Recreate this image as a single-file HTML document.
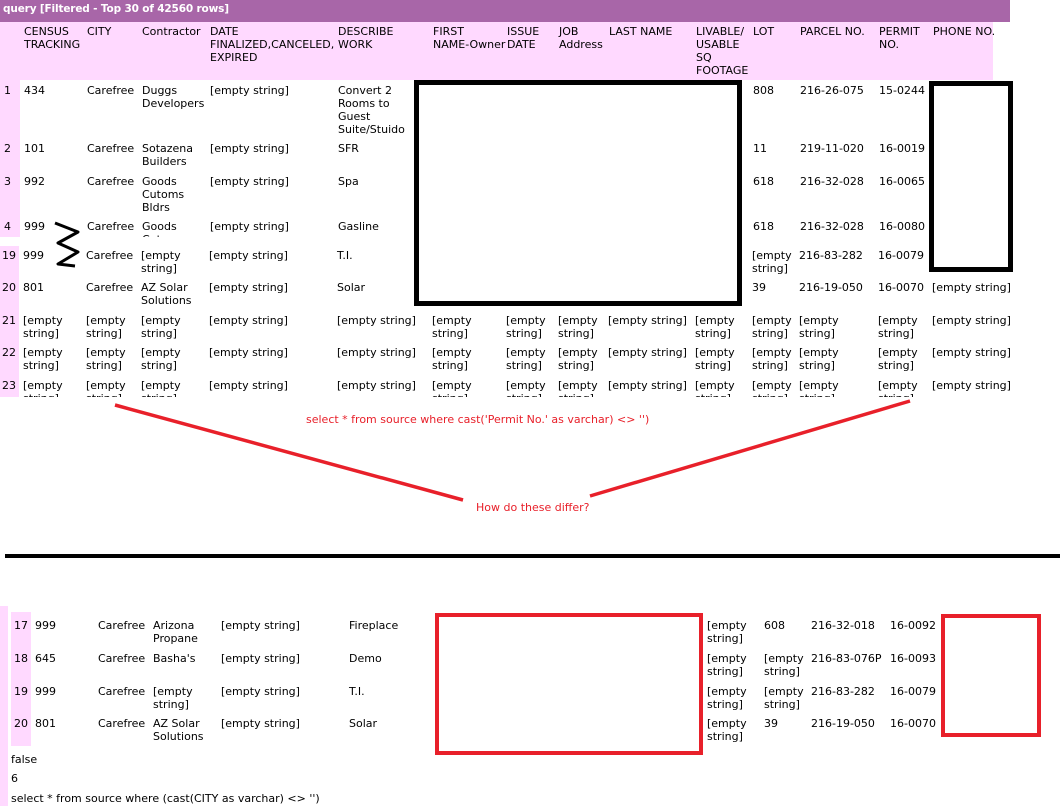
<!DOCTYPE html>
<html><head><meta charset="utf-8"><style>
body{margin:0;width:1060px;height:806px;position:relative;background:#fff;overflow:hidden;font-family:"DejaVu Sans","Liberation Sans",sans-serif;font-size:11px;color:#000;}
.a{position:absolute;line-height:13px;white-space:nowrap;}
.b{position:absolute;}
#top{position:absolute;left:0;top:0;width:1060px;height:397px;overflow:hidden;}
</style></head><body>
<div id="top">
<div class="b" style="left:0;top:0;width:1010px;height:22px;background:#a866a8"></div>
<div class="a" style="left:3px;top:3px;color:#fff;font-weight:bold;font-size:10.5px;letter-spacing:-0.15px">query [Filtered - Top 30 of 42560 rows]</div>
<div class="b" style="left:0;top:22px;width:993px;height:58px;background:#ffd9ff"></div>
<div class="b" style="left:0;top:80px;width:20px;height:157px;background:#ffd9ff"></div>
<div class="b" style="left:0;top:246px;width:19px;height:160px;background:#ffd9ff"></div>
<div class="a" style="left:24px;top:25px">CENSUS<br>TRACKING</div>
<div class="a" style="left:87px;top:25px">CITY</div>
<div class="a" style="left:142px;top:25px">Contractor</div>
<div class="a" style="left:210px;top:25px">DATE<br>FINALIZED,CANCELED,<br>EXPIRED</div>
<div class="a" style="left:338px;top:25px">DESCRIBE<br>WORK</div>
<div class="a" style="left:433px;top:25px">FIRST<br>NAME-Owner</div>
<div class="a" style="left:507px;top:25px">ISSUE<br>DATE</div>
<div class="a" style="left:559px;top:25px">JOB<br>Address</div>
<div class="a" style="left:609px;top:25px">LAST NAME</div>
<div class="a" style="left:696px;top:25px">LIVABLE/<br>USABLE<br>SQ<br>FOOTAGE</div>
<div class="a" style="left:753px;top:25px">LOT</div>
<div class="a" style="left:800px;top:25px">PARCEL NO.</div>
<div class="a" style="left:879px;top:25px">PERMIT<br>NO.</div>
<div class="a" style="left:933px;top:25px">PHONE NO.</div>

<div class="a" style="left:4px;top:84px">1</div><div class="a" style="left:24px;top:84px">434</div><div class="a" style="left:87px;top:84px">Carefree</div><div class="a" style="left:142px;top:84px">Duggs<br>Developers</div><div class="a" style="left:210px;top:84px">[empty string]</div><div class="a" style="left:338px;top:84px">Convert 2<br>Rooms to<br>Guest<br>Suite/Stuido</div><div class="a" style="left:753px;top:84px">808</div><div class="a" style="left:800px;top:84px">216-26-075</div><div class="a" style="left:879px;top:84px">15-0244</div>
<div class="a" style="left:4px;top:142px">2</div><div class="a" style="left:24px;top:142px">101</div><div class="a" style="left:87px;top:142px">Carefree</div><div class="a" style="left:142px;top:142px">Sotazena<br>Builders</div><div class="a" style="left:210px;top:142px">[empty string]</div><div class="a" style="left:338px;top:142px">SFR</div><div class="a" style="left:753px;top:142px">11</div><div class="a" style="left:800px;top:142px">219-11-020</div><div class="a" style="left:879px;top:142px">16-0019</div>
<div class="a" style="left:4px;top:175px">3</div><div class="a" style="left:24px;top:175px">992</div><div class="a" style="left:87px;top:175px">Carefree</div><div class="a" style="left:142px;top:175px">Goods<br>Cutoms<br>Bldrs</div><div class="a" style="left:210px;top:175px">[empty string]</div><div class="a" style="left:338px;top:175px">Spa</div><div class="a" style="left:753px;top:175px">618</div><div class="a" style="left:800px;top:175px">216-32-028</div><div class="a" style="left:879px;top:175px">16-0065</div>
<div class="b" style="left:0;top:220px;width:1060px;height:17px;overflow:hidden">
<div class="a" style="left:4px;top:0">4</div><div class="a" style="left:24px;top:0">999</div><div class="a" style="left:87px;top:0">Carefree</div><div class="a" style="left:142px;top:0">Goods<br>Cutoms</div><div class="a" style="left:210px;top:0">[empty string]</div><div class="a" style="left:338px;top:0">Gasline</div><div class="a" style="left:753px;top:0">618</div><div class="a" style="left:800px;top:0">216-32-028</div><div class="a" style="left:879px;top:0">16-0080</div></div>
<div class="a" style="left:2px;top:249px">19</div><div class="a" style="left:23px;top:249px">999</div><div class="a" style="left:86px;top:249px">Carefree</div><div class="a" style="left:141px;top:249px">[empty<br>string]</div><div class="a" style="left:209px;top:249px">[empty string]</div><div class="a" style="left:337px;top:249px">T.I.</div><div class="a" style="left:752px;top:249px">[empty<br>string]</div><div class="a" style="left:799px;top:249px">216-83-282</div><div class="a" style="left:878px;top:249px">16-0079</div>
<div class="a" style="left:2px;top:281px">20</div><div class="a" style="left:23px;top:281px">801</div><div class="a" style="left:86px;top:281px">Carefree</div><div class="a" style="left:141px;top:281px">AZ Solar<br>Solutions</div><div class="a" style="left:209px;top:281px">[empty string]</div><div class="a" style="left:337px;top:281px">Solar</div><div class="a" style="left:752px;top:281px">39</div><div class="a" style="left:799px;top:281px">216-19-050</div><div class="a" style="left:878px;top:281px">16-0070</div><div class="a" style="left:932px;top:281px">[empty string]</div>
<div class="b" style="left:0;top:314px">
<div class="a" style="left:2px;top:0">21</div><div class="a" style="left:23px;top:0">[empty<br>string]</div><div class="a" style="left:86px;top:0">[empty<br>string]</div><div class="a" style="left:141px;top:0">[empty<br>string]</div><div class="a" style="left:209px;top:0">[empty string]</div><div class="a" style="left:337px;top:0">[empty string]</div><div class="a" style="left:432px;top:0">[empty<br>string]</div><div class="a" style="left:506px;top:0">[empty<br>string]</div><div class="a" style="left:558px;top:0">[empty<br>string]</div><div class="a" style="left:608px;top:0">[empty string]</div><div class="a" style="left:695px;top:0">[empty<br>string]</div><div class="a" style="left:752px;top:0">[empty<br>string]</div><div class="a" style="left:799px;top:0">[empty<br>string]</div><div class="a" style="left:878px;top:0">[empty<br>string]</div><div class="a" style="left:932px;top:0">[empty string]</div></div>
<div class="b" style="left:0;top:346px">
<div class="a" style="left:2px;top:0">22</div><div class="a" style="left:23px;top:0">[empty<br>string]</div><div class="a" style="left:86px;top:0">[empty<br>string]</div><div class="a" style="left:141px;top:0">[empty<br>string]</div><div class="a" style="left:209px;top:0">[empty string]</div><div class="a" style="left:337px;top:0">[empty string]</div><div class="a" style="left:432px;top:0">[empty<br>string]</div><div class="a" style="left:506px;top:0">[empty<br>string]</div><div class="a" style="left:558px;top:0">[empty<br>string]</div><div class="a" style="left:608px;top:0">[empty string]</div><div class="a" style="left:695px;top:0">[empty<br>string]</div><div class="a" style="left:752px;top:0">[empty<br>string]</div><div class="a" style="left:799px;top:0">[empty<br>string]</div><div class="a" style="left:878px;top:0">[empty<br>string]</div><div class="a" style="left:932px;top:0">[empty string]</div></div>
<div class="b" style="left:0;top:379px">
<div class="a" style="left:2px;top:0">23</div><div class="a" style="left:23px;top:0">[empty<br>string]</div><div class="a" style="left:86px;top:0">[empty<br>string]</div><div class="a" style="left:141px;top:0">[empty<br>string]</div><div class="a" style="left:209px;top:0">[empty string]</div><div class="a" style="left:337px;top:0">[empty string]</div><div class="a" style="left:432px;top:0">[empty<br>string]</div><div class="a" style="left:506px;top:0">[empty<br>string]</div><div class="a" style="left:558px;top:0">[empty<br>string]</div><div class="a" style="left:608px;top:0">[empty string]</div><div class="a" style="left:695px;top:0">[empty<br>string]</div><div class="a" style="left:752px;top:0">[empty<br>string]</div><div class="a" style="left:799px;top:0">[empty<br>string]</div><div class="a" style="left:878px;top:0">[empty<br>string]</div><div class="a" style="left:932px;top:0">[empty string]</div></div>
<div class="b" style="left:414px;top:80px;width:318px;height:216px;border:5px solid #000;background:#fff"></div>
<div class="b" style="left:929px;top:81px;width:74px;height:181px;border:5px solid #000;background:#fff"></div>
<svg class="b" style="left:0;top:0" width="1060" height="400"><path d="M55 223 L78 232 L58 243 L78 252 L58 264 L75 266" fill="none" stroke="#000" stroke-width="3" stroke-linejoin="round"/></svg>
</div>

<svg class="b" style="left:0;top:0" width="1060" height="806">
<line x1="115" y1="405" x2="463" y2="500" stroke="#e8202a" stroke-width="3.5"/>
<line x1="590" y1="496" x2="910" y2="401" stroke="#e8202a" stroke-width="3.5"/>
<line x1="5" y1="556" x2="1060" y2="556" stroke="#000" stroke-width="4"/>
</svg>
<div class="a" style="left:306px;top:413px;color:#e8202a">select * from source where cast('Permit No.' as varchar) &lt;&gt; '')</div>
<div class="a" style="left:476px;top:501px;color:#e8202a">How do these differ?</div>

<div class="b" style="left:0;top:606px;width:8px;height:200px;background:#ffd9ff"></div>
<div class="b" style="left:11px;top:612px;width:20px;height:134px;background:#ffd9ff"></div>
<div class="a" style="left:14px;top:619px">17</div><div class="a" style="left:35px;top:619px">999</div><div class="a" style="left:98px;top:619px">Carefree</div><div class="a" style="left:153px;top:619px">Arizona<br>Propane</div><div class="a" style="left:221px;top:619px">[empty string]</div><div class="a" style="left:349px;top:619px">Fireplace</div><div class="a" style="left:707px;top:619px">[empty<br>string]</div><div class="a" style="left:764px;top:619px">608</div><div class="a" style="left:811px;top:619px">216-32-018</div><div class="a" style="left:890px;top:619px">16-0092</div>
<div class="a" style="left:14px;top:652px">18</div><div class="a" style="left:35px;top:652px">645</div><div class="a" style="left:98px;top:652px">Carefree</div><div class="a" style="left:153px;top:652px">Basha's</div><div class="a" style="left:221px;top:652px">[empty string]</div><div class="a" style="left:349px;top:652px">Demo</div><div class="a" style="left:707px;top:652px">[empty<br>string]</div><div class="a" style="left:764px;top:652px">[empty<br>string]</div><div class="a" style="left:811px;top:652px">216-83-076P</div><div class="a" style="left:890px;top:652px">16-0093</div>
<div class="a" style="left:14px;top:685px">19</div><div class="a" style="left:35px;top:685px">999</div><div class="a" style="left:98px;top:685px">Carefree</div><div class="a" style="left:153px;top:685px">[empty<br>string]</div><div class="a" style="left:221px;top:685px">[empty string]</div><div class="a" style="left:349px;top:685px">T.I.</div><div class="a" style="left:707px;top:685px">[empty<br>string]</div><div class="a" style="left:764px;top:685px">[empty<br>string]</div><div class="a" style="left:811px;top:685px">216-83-282</div><div class="a" style="left:890px;top:685px">16-0079</div>
<div class="a" style="left:14px;top:717px">20</div><div class="a" style="left:35px;top:717px">801</div><div class="a" style="left:98px;top:717px">Carefree</div><div class="a" style="left:153px;top:717px">AZ Solar<br>Solutions</div><div class="a" style="left:221px;top:717px">[empty string]</div><div class="a" style="left:349px;top:717px">Solar</div><div class="a" style="left:707px;top:717px">[empty<br>string]</div><div class="a" style="left:764px;top:717px">39</div><div class="a" style="left:811px;top:717px">216-19-050</div><div class="a" style="left:890px;top:717px">16-0070</div>
<div class="b" style="left:435px;top:613px;width:260px;height:134px;border:4px solid #e8202a"></div>
<div class="b" style="left:941px;top:614px;width:92px;height:115px;border:4px solid #e8202a"></div>
<div class="a" style="left:11px;top:753px">false</div>
<div class="a" style="left:11px;top:772px">6</div>
<div class="a" style="left:11px;top:792px">select * from source where (cast(CITY as varchar) &lt;&gt; '')</div>
</body></html>
